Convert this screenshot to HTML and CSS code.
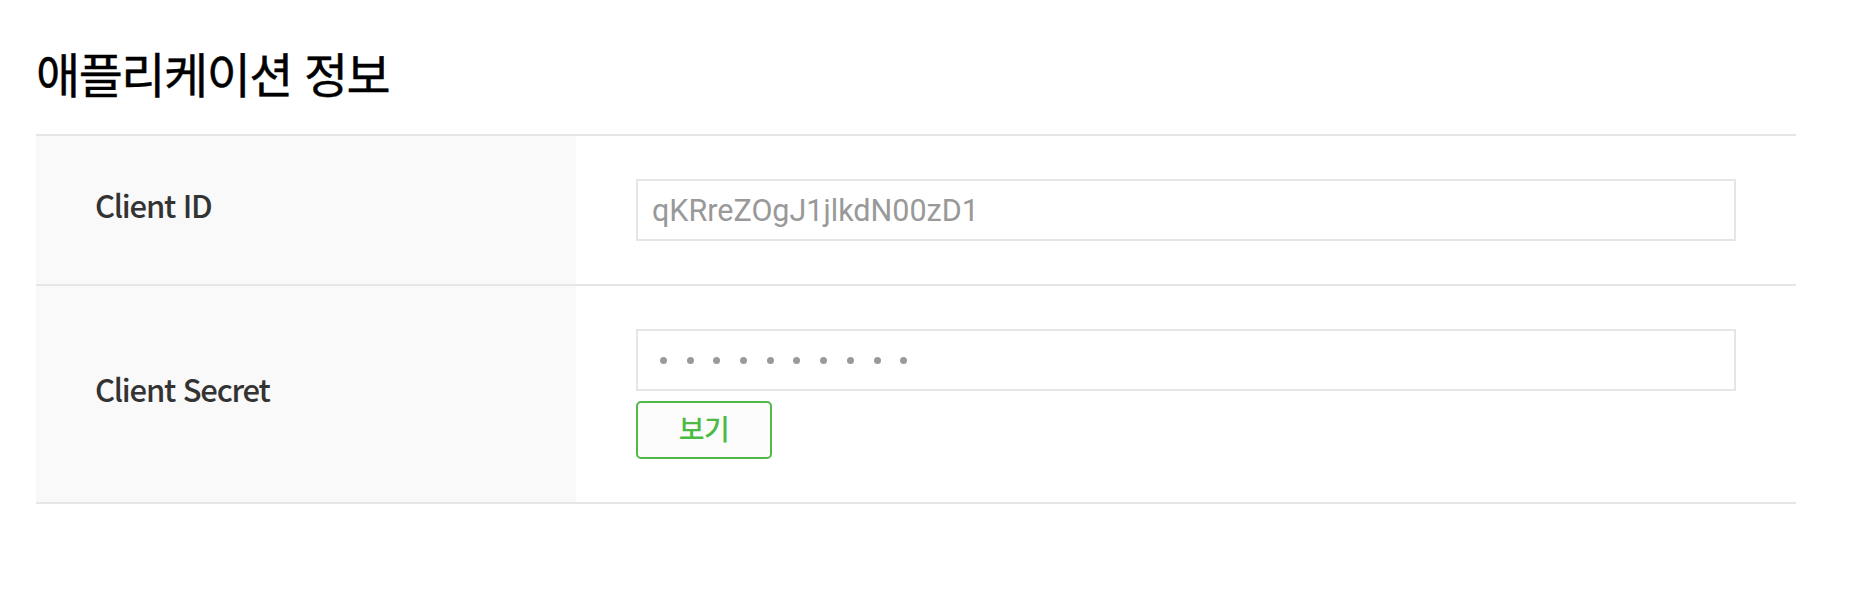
FILE: index.html
```html
<!DOCTYPE html>
<html lang="ko">
<head>
<meta charset="utf-8">
<title>애플리케이션 정보</title>
<link rel="stylesheet" href="styles.css">
</head>
<body>
<section class="app-info">
  <h2 class="title">애플리케이션 정보</h2>
  <div class="info-table">
    <div class="row">
      <div class="label">Client ID</div>
      <div class="value">
        <div class="field">qKRreZOgJ1jlkdN00zD1</div>
      </div>
    </div>
    <div class="row">
      <div class="label">Client Secret</div>
      <div class="value">
        <div class="field secret">
          <span class="dot"></span><span class="dot"></span><span class="dot"></span><span class="dot"></span><span class="dot"></span><span class="dot"></span><span class="dot"></span><span class="dot"></span><span class="dot"></span><span class="dot"></span>
        </div>
        <button class="btn-view" type="button">보기</button>
      </div>
    </div>
  </div>
</section>
</body>
</html>
```

FILE: styles.css
```css
* { box-sizing: border-box; }
html, body { margin: 0; padding: 0; background: #fff; }
body {
  font-family: "Noto Sans CJK KR", "Noto Sans", sans-serif;
  color: #333;
}
.app-info {
  padding: 0 74px 0 36px;
}
.title {
  margin: 0;
  padding-top: 42px;
  height: 134px;
  font-size: 48px;
  line-height: 60px;
  font-weight: 400;
  color: #000;
  letter-spacing: -1.5px;
  -webkit-text-stroke: 0.4px #000;
}
.info-table {
  border-top: 2px solid #e6e6e6;
}
.row {
  display: grid;
  grid-template-columns: 540px 1fr;
  border-bottom: 2px solid #e6e6e6;
}
.label {
  background: #f9f9f9;
  padding-left: 59px;
  padding-bottom: 12px;
  display: flex;
  align-items: center;
  font-size: 31px;
  font-weight: 500;
  letter-spacing: -1.2px;
  color: #333;
}
.value {
  padding: 43px 60px;
  display: flex;
  flex-direction: column;
  align-items: flex-start;
  gap: 10px;
}
.field {
  width: 100%;
  height: 62px;
  border: 2px solid #e6e6e6;
  background: #fff;
  padding-left: 14px;
  display: flex;
  align-items: center;
  font-family: Roboto, "Noto Sans", sans-serif;
  font-size: 30.5px;
  color: #999;
  letter-spacing: 0;
}
.field.secret {
  padding-left: 22px;
  gap: 19.7px;
}
.dot {
  width: 7px;
  height: 7px;
  border-radius: 50%;
  background: #9a9a9a;
  flex: none;
}
.btn-view {
  width: 136px;
  height: 58px;
  border: 2px solid #52b848;
  border-radius: 5px;
  background: #fcfcfc;
  color: #4cbb46;
  font-family: "Noto Sans CJK KR", sans-serif;
  font-size: 28px;
  font-weight: 500;
  letter-spacing: -0.5px;
  padding: 0 0 4px;
  cursor: pointer;
}
```
